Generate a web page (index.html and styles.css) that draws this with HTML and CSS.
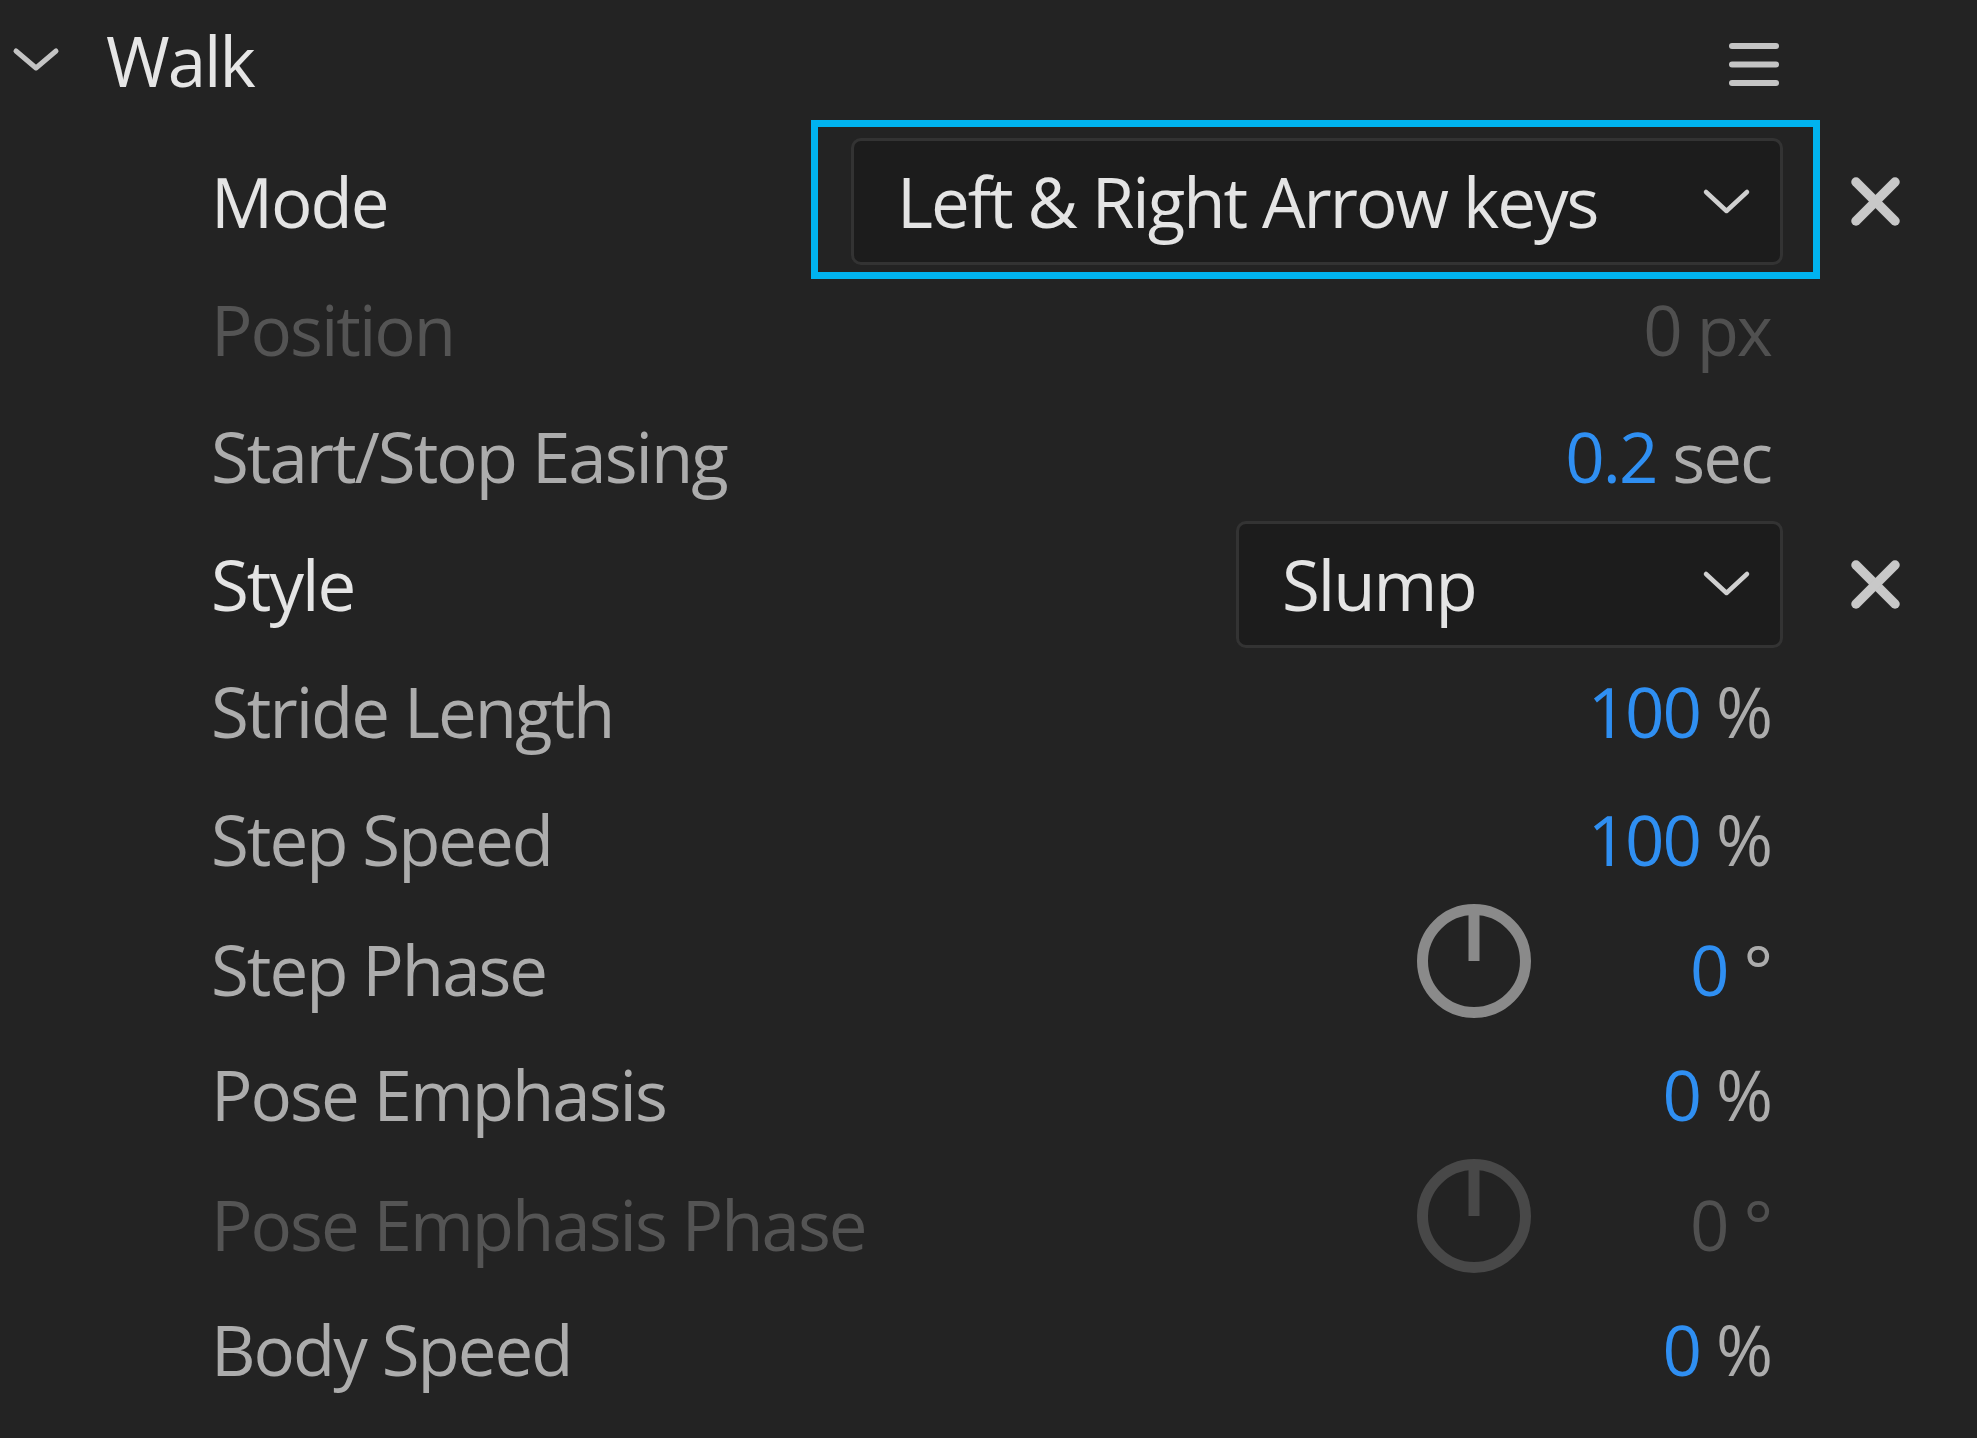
FILE: index.html
```html
<!DOCTYPE html>
<html lang="en">
<head>
<meta charset="utf-8">
<title>Walk</title>
<link rel="stylesheet" href="styles.css">
</head>
<body>
<div class="panel">
  <div class="header">
    <svg class="twirl" width="48" height="26" viewBox="0 0 48 26"><polyline points="4,4 24,21 44,4" fill="none" stroke="#c4c4c4" stroke-width="5" stroke-linecap="round" stroke-linejoin="round"/></svg>
    <span class="title">Walk</span>
    <svg class="menu" width="50" height="46" viewBox="0 0 50 46"><g stroke="#c4c4c4" stroke-width="6" stroke-linecap="round"><line x1="3" y1="4" x2="47" y2="4"/><line x1="3" y1="22.5" x2="47" y2="22.5"/><line x1="3" y1="41" x2="47" y2="41"/></g></svg>
  </div>
  <div class="rows">
    <div class="row">
      <span class="label strong">Mode</span>
      <div class="dropdown wide focused"><span class="dd-text">Left &amp; Right Arrow keys</span><svg class="dd-chev" width="49" height="28" viewBox="0 0 49 28"><polyline points="4,4 24.5,23 45,4" fill="none" stroke="#d0d0d0" stroke-width="4.5" stroke-linecap="round" stroke-linejoin="round"/></svg></div>
      <span class="clear"><svg width="51" height="51" viewBox="0 0 51 51"><g stroke="#c8c8c8" stroke-width="9.5" stroke-linecap="round"><line x1="6" y1="6" x2="45" y2="45"/><line x1="45" y1="6" x2="6" y2="45"/></g></svg></span>
    </div>
    <div class="row">
      <span class="label dim">Position</span>
      <span class="value dim">0 px</span>
      <span></span>
    </div>
    <div class="row">
      <span class="label">Start/Stop Easing</span>
      <span class="value"><span class="num">0.2</span> sec</span>
      <span></span>
    </div>
    <div class="row">
      <span class="label strong">Style</span>
      <div class="dropdown narrow"><span class="dd-text">Slump</span><svg class="dd-chev" width="49" height="28" viewBox="0 0 49 28"><polyline points="4,4 24.5,23 45,4" fill="none" stroke="#d0d0d0" stroke-width="4.5" stroke-linecap="round" stroke-linejoin="round"/></svg></div>
      <span class="clear"><svg width="51" height="51" viewBox="0 0 51 51"><g stroke="#c8c8c8" stroke-width="9.5" stroke-linecap="round"><line x1="6" y1="6" x2="45" y2="45"/><line x1="45" y1="6" x2="6" y2="45"/></g></svg></span>
    </div>
    <div class="row">
      <span class="label">Stride Length</span>
      <span class="value"><span class="num">100</span> %</span>
      <span></span>
    </div>
    <div class="row">
      <span class="label">Step Speed</span>
      <span class="value"><span class="num">100</span> %</span>
      <span></span>
    </div>
    <div class="row">
      <span class="label">Step Phase</span>
      <div class="knob-wrap">
        <svg class="knob" width="116" height="116" viewBox="0 0 116 116"><circle cx="58" cy="58" r="51.5" fill="none" stroke="#8a8a8a" stroke-width="11"/><line x1="58" y1="10" x2="58" y2="58" stroke="#8a8a8a" stroke-width="11"/></svg>
        <span class="value knob-value"><span class="num">0</span> °</span>
      </div>
      <span></span>
    </div>
    <div class="row">
      <span class="label">Pose Emphasis</span>
      <span class="value"><span class="num">0</span> %</span>
      <span></span>
    </div>
    <div class="row">
      <span class="label dim">Pose Emphasis Phase</span>
      <div class="knob-wrap">
        <svg class="knob" width="116" height="116" viewBox="0 0 116 116"><circle cx="58" cy="58" r="51.5" fill="none" stroke="#484848" stroke-width="11"/><line x1="58" y1="10" x2="58" y2="58" stroke="#484848" stroke-width="11"/></svg>
        <span class="value knob-value dim">0 °</span>
      </div>
      <span></span>
    </div>
    <div class="row">
      <span class="label">Body Speed</span>
      <span class="value"><span class="num">0</span> %</span>
      <span></span>
    </div>
  </div>
</div>
</body>
</html>
```

FILE: styles.css
```css
html, body {
  margin: 0;
  padding: 0;
  background: #232323;
}

body {
  width: 1977px;
  height: 1438px;
  overflow: hidden;
  font-family: "Open Sans", "Noto Sans", "Liberation Sans", sans-serif;
  font-size: 69px;
  letter-spacing: -2px;
  line-height: 1.2;
  color: #acacac;
}

.panel {
  padding: 0 76px 0 0;
}

.header {
  display: flex;
  align-items: center;
  height: 120px;
  padding-left: 12px;
}

.twirl {
  display: block;
  flex: none;
}

.title {
  margin-left: 46px;
  color: #e6e6e6;
}

.menu {
  display: block;
  margin-left: auto;
  margin-right: 122px;
  margin-top: 10px;
}

.rows {
  padding-top: 18px;
}

.row {
  display: grid;
  grid-template-columns: 1fr auto 51px;
  column-gap: 67px;
  align-items: center;
  height: 127.5px;
  padding-left: 211px;
}

.label {
  white-space: nowrap;
  color: #acacac;
}

.label.strong {
  color: #e4e4e4;
}

.dim,
.label.dim {
  color: #545454;
}

.value {
  justify-self: end;
  padding-right: 12px;
  white-space: nowrap;
  color: #acacac;
}

.value.dim {
  color: #505050;
}

.num {
  color: #2f8ff2;
}

.dropdown {
  position: relative;
  box-sizing: border-box;
  display: flex;
  align-items: center;
  justify-content: space-between;
  height: 127px;
  padding: 0 29px 0 43px;
  background: #1c1c1c;
  border: 3px solid #333333;
  border-radius: 10px;
  color: #e4e4e4;
}

.dropdown.wide {
  width: 932px;
}

.dropdown.narrow {
  width: 547px;
}

.dd-text {
  white-space: nowrap;
}

.dd-chev {
  display: block;
  flex: none;
}

.dropdown.focused::after {
  content: "";
  position: absolute;
  top: -21px;
  left: -43px;
  right: -40px;
  bottom: -17px;
  border: 7px solid #00b3ef;
  pointer-events: none;
}

.clear svg {
  display: block;
}

.knob-wrap {
  display: flex;
  align-items: center;
}

.knob {
  display: block;
  flex: none;
  margin-bottom: 16px;
}

.knob-value {
  box-sizing: border-box;
  width: 251px;
  text-align: right;
}
```
